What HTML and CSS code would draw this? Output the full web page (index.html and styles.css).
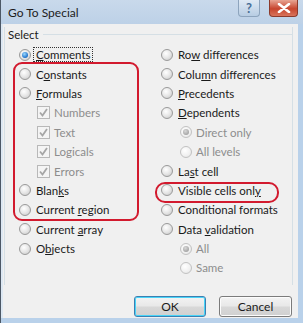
FILE: index.html
```html
<!DOCTYPE html>
<html lang="en">

<head>
    <meta charset="UTF-8" />
    <meta name="viewport" content="width=device-width, initial-scale=1.0" />
    <title>Go To Special</title>
    <link rel="stylesheet" href="styles.css">
</head>

<body>
    <div class="dialog">
        <div class="titlebar">
            <span class="title">Go To Special</span>
            <div class="caption">
                <span class="cap help">?</span>
                <span class="cap close">
                    <svg width="14" height="10" viewBox="0 0 14 10">
                        <path d="M2 1 L12 9 M12 1 L2 9" stroke="#fff" stroke-width="2.6" stroke-linecap="round" />
                    </svg>
                </span>
            </div>
        </div>

        <div class="client">
            <div class="group">
                <div class="group-head"><span class="legend">Select</span><span class="rule"></span></div>
                <div class="cols">
                    <div class="col">
                        <div class="opt"><span class="radio on"></span><span class="label focus"><u>C</u>omments</span></div>
                        <div class="opt"><span class="radio"></span><span class="label">C<u>o</u>nstants</span></div>
                        <div class="opt"><span class="radio"></span><span class="label"><u>F</u>ormulas</span></div>
                        <div class="opt sub-check"><span class="check"></span><span class="label off">Numbers</span></div>
                        <div class="opt sub-check"><span class="check"></span><span class="label off">Text</span></div>
                        <div class="opt sub-check"><span class="check"></span><span class="label off">Logicals</span></div>
                        <div class="opt sub-check"><span class="check"></span><span class="label off">Errors</span></div>
                        <div class="opt"><span class="radio"></span><span class="label">Blan<u>k</u>s</span></div>
                        <div class="opt"><span class="radio"></span><span class="label">Current <u>r</u>egion</span></div>
                        <div class="opt"><span class="radio"></span><span class="label">Current <u>a</u>rray</span></div>
                        <div class="opt"><span class="radio"></span><span class="label">O<u>b</u>jects</span></div>
                    </div>
                    <div class="col">
                        <div class="opt"><span class="radio"></span><span class="label">Ro<u>w</u> differences</span></div>
                        <div class="opt"><span class="radio"></span><span class="label">Colu<u>m</u>n differences</span></div>
                        <div class="opt"><span class="radio"></span><span class="label"><u>P</u>recedents</span></div>
                        <div class="opt"><span class="radio"></span><span class="label"><u>D</u>ependents</span></div>
                        <div class="opt sub-radio"><span class="radio dis on"></span><span class="label off">Direct only</span></div>
                        <div class="opt sub-radio"><span class="radio dis"></span><span class="label off">All levels</span></div>
                        <div class="opt"><span class="radio"></span><span class="label">La<u>s</u>t cell</span></div>
                        <div class="opt"><span class="radio"></span><span class="label">Visible cells onl<u>y</u></span></div>
                        <div class="opt"><span class="radio"></span><span class="label">Conditional formats</span></div>
                        <div class="opt"><span class="radio"></span><span class="label">Data <u>v</u>alidation</span></div>
                        <div class="opt sub-radio"><span class="radio dis on"></span><span class="label off">All</span></div>
                        <div class="opt sub-radio"><span class="radio dis"></span><span class="label off">Same</span></div>
                    </div>
                </div>
            </div>

            <div class="buttons">
                <button class="btn default">OK</button>
                <button class="btn">Cancel</button>
            </div>

            <!-- marcas rojas encima del dialogo -->
            <div class="mark mark-left"></div>
            <div class="mark mark-right"></div>
        </div>
    </div>
</body>

</html>
```

FILE: styles.css
```css
body {
    margin: 0;
    background: #fff;
    font-family: "Segoe UI", Lato, sans-serif;
    font-size: 11.5px;
    color: #1a1a1a;
}

.dialog {
    width: 303px;
    height: 323px;
    display: flex;
    flex-direction: column;
    background: #b9d1ea;
    border-left: 1px solid #4c5866;
    box-sizing: border-box;
}

.titlebar {
    height: 24px;
    display: flex;
    align-items: center;
    justify-content: space-between;
    background: linear-gradient(#c9d9eb, #bdd1e7);
    padding-left: 7px;
}

.title {
    font-size: 12px;
    color: #1c1c1c;
}

.caption {
    display: flex;
    align-self: flex-start;
    gap: 9px;
    margin-right: 5px;
}

.cap {
    height: 17px;
    display: flex;
    align-items: center;
    justify-content: center;
    border: 1px solid #8da4bd;
    border-top: none;
    border-radius: 0 0 4px 4px;
    box-sizing: border-box;
}

.help {
    width: 22px;
    background: linear-gradient(#dfe9f4, #b8cde3);
    color: #4a6e96;
    font-weight: bold;
    font-size: 13px;
}

.close {
    width: 29px;
    background: linear-gradient(#e8a593, #c7452e 55%, #d8745c);
    border-color: #8c3a2c;
}

.client {
    flex: 1;
    position: relative;
    background: #f0f0f0;
    margin: 0 5px 5px 0;
    border-left: 2px solid #dde8f3;
}

.group {
    margin: 0 5px 0 1px;
    height: 258px;
    border-right: 1px solid #d5dfe5;
    border-left: 1px solid #d5dfe5;
}

.group-head {
    display: flex;
    align-items: center;
    height: 14px;
    margin-top: 3px;
    gap: 4px;
}

.legend {
    margin-left: 3px;
}

.rule {
    flex: 1;
    border-top: 1px solid #d5dfe5;
}

.cols {
    display: grid;
    grid-template-columns: 142px 1fr;
    padding: 4px 0 0 14px;
}

.opt {
    height: 19.4px;
    display: flex;
    align-items: center;
    gap: 5px;
}

.sub-check {
    margin-left: 18px;
    gap: 4px;
}

.sub-radio {
    margin-left: 19px;
    gap: 4px;
}

.label u {
    text-decoration-thickness: 1px;
    text-underline-offset: 1px;
}

.label.off {
    color: #8d8d8d;
}

.label.focus {
    outline: 1px dotted #333;
    outline-offset: 0;
    margin-left: -2px;
    padding: 0 1px 0 2px;
}

.radio {
    width: 12px;
    height: 12px;
    border-radius: 50%;
    box-sizing: border-box;
    border: 1px solid #9a9a9a;
    background: radial-gradient(circle at 40% 35%, #ffffff, #e6e6e6 50%, #c4c4c4);
    position: relative;
    flex: none;
}

.radio.on::after {
    content: "";
    position: absolute;
    left: 2px;
    top: 2px;
    width: 6px;
    height: 6px;
    border-radius: 50%;
    background: radial-gradient(circle at 40% 35%, #9ad9ff, #1d6fc9 70%, #18508f);
}

.radio.dis {
    border-color: #c2c2c2;
    background: radial-gradient(circle at 40% 35%, #ffffff, #f0f0f0 60%, #dcdcdc);
}

.radio.dis.on::after {
    background: radial-gradient(circle at 40% 35%, #d8d8d8, #a6a6a6 70%, #8f8f8f);
}

.check {
    width: 13px;
    height: 13px;
    box-sizing: border-box;
    border: 1px solid #b8b8b8;
    background: #f4f4f4 url("data:image/svg+xml,%3Csvg xmlns='http://www.w3.org/2000/svg' width='11' height='11'%3E%3Cpath d='M2 5.5 L4.5 8.5 L9 2' fill='none' stroke='%23a6a6a6' stroke-width='1.8'/%3E%3C/svg%3E") center / 11px 11px no-repeat;
    flex: none;
}

.buttons {
    display: flex;
    justify-content: flex-end;
    gap: 13px;
    margin: 11px 6px 0 0;
}

.btn {
    height: 21px;
    width: 73px;
    font-family: inherit;
    font-size: 12px;
    color: #1a1a1a;
    border: 1px solid #7b7b7b;
    border-radius: 3px;
    background: linear-gradient(#f3f3f3 0%, #e8e8e8 48%, #d8d8d8 52%, #d0d0d0 100%);
    box-shadow: inset 0 0 0 1px #fcfcfc;
    padding: 0;
}

.btn.default {
    border-color: #3c7fb1;
    box-shadow: inset 0 0 0 1px #48d4f8;
    width: 72px;
}

.mark {
    position: absolute;
    border: 2.5px solid #d21a2e;
    box-sizing: border-box;
}

.mark-left {
    left: 10px;
    top: 38px;
    width: 126px;
    height: 159px;
    border-radius: 9px;
}

.mark-right {
    left: 152px;
    top: 158px;
    width: 124px;
    height: 21px;
    border-radius: 10px;
}
```
